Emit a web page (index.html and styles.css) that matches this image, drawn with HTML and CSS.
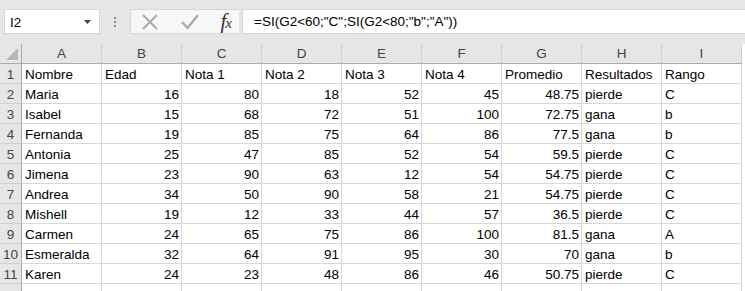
FILE: index.html
```html
<!DOCTYPE html>
<html lang="es">
<head>
    <meta charset="UTF-8">
    <title>Notas</title>
    <link rel="stylesheet" href="styles.css">
</head>
<body>
    <div class="formula-bar">
        <div class="name-box">
            <span>I2</span>
            <svg class="drop" width="7" height="4" viewBox="0 0 7 4"><path d="M0 0h7L3.5 4z" fill="#444"/></svg>
        </div>
        <div class="grip">
            <i></i><i></i><i></i>
        </div>
        <div class="fx-buttons">
            <svg width="18" height="18" viewBox="0 0 18 18"><path d="M2 2L16 16M16 2L2 16" stroke="#a8a8a8" stroke-width="1.8" fill="none"/></svg>
            <svg width="20" height="18" viewBox="0 0 20 18"><path d="M2 9l5.5 6L18 2" stroke="#a8a8a8" stroke-width="2.2" fill="none"/></svg>
            <span class="fx">f<small>x</small></span>
        </div>
        <div class="formula">=SI(G2&lt;60;"C";SI(G2&lt;80;"b";"A"))</div>
    </div>

    <table class="sheet">
        <colgroup>
            <col class="rowhead">
            <col><col><col><col><col><col><col><col><col>
        </colgroup>
        <thead>
            <tr>
                <th class="corner"><span></span></th>
                <th>A</th><th>B</th><th>C</th><th>D</th><th>E</th><th>F</th><th>G</th><th>H</th><th>I</th>
            </tr>
        </thead>
        <tbody>
            <tr><th>1</th><td>Nombre</td><td>Edad</td><td>Nota 1</td><td>Nota 2</td><td>Nota 3</td><td>Nota 4</td><td>Promedio</td><td>Resultados</td><td>Rango</td></tr>
            <tr><th>2</th><td>Maria</td><td class="n">16</td><td class="n">80</td><td class="n">18</td><td class="n">52</td><td class="n">45</td><td class="n">48.75</td><td>pierde</td><td>C</td></tr>
            <tr><th>3</th><td>Isabel</td><td class="n">15</td><td class="n">68</td><td class="n">72</td><td class="n">51</td><td class="n">100</td><td class="n">72.75</td><td>gana</td><td>b</td></tr>
            <tr><th>4</th><td>Fernanda</td><td class="n">19</td><td class="n">85</td><td class="n">75</td><td class="n">64</td><td class="n">86</td><td class="n">77.5</td><td>gana</td><td>b</td></tr>
            <tr><th>5</th><td>Antonia</td><td class="n">25</td><td class="n">47</td><td class="n">85</td><td class="n">52</td><td class="n">54</td><td class="n">59.5</td><td>pierde</td><td>C</td></tr>
            <tr><th>6</th><td>Jimena</td><td class="n">23</td><td class="n">90</td><td class="n">63</td><td class="n">12</td><td class="n">54</td><td class="n">54.75</td><td>pierde</td><td>C</td></tr>
            <tr><th>7</th><td>Andrea</td><td class="n">34</td><td class="n">50</td><td class="n">90</td><td class="n">58</td><td class="n">21</td><td class="n">54.75</td><td>pierde</td><td>C</td></tr>
            <tr><th>8</th><td>Mishell</td><td class="n">19</td><td class="n">12</td><td class="n">33</td><td class="n">44</td><td class="n">57</td><td class="n">36.5</td><td>pierde</td><td>C</td></tr>
            <tr><th>9</th><td>Carmen</td><td class="n">24</td><td class="n">65</td><td class="n">75</td><td class="n">86</td><td class="n">100</td><td class="n">81.5</td><td>gana</td><td>A</td></tr>
            <tr><th>10</th><td>Esmeralda</td><td class="n">32</td><td class="n">64</td><td class="n">91</td><td class="n">95</td><td class="n">30</td><td class="n">70</td><td>gana</td><td>b</td></tr>
            <tr><th>11</th><td>Karen</td><td class="n">24</td><td class="n">23</td><td class="n">48</td><td class="n">86</td><td class="n">46</td><td class="n">50.75</td><td>pierde</td><td>C</td></tr>
            <tr><th></th><td></td><td></td><td></td><td></td><td></td><td></td><td></td><td></td><td></td></tr>
        </tbody>
    </table>
</body>
</html>
```

FILE: styles.css
```css
body, html {
    margin: 0;
    padding: 0;
    background: #fff;
    font-family: "Liberation Sans", Arial, sans-serif;
    font-size: 13.5px;
    color: #000;
    overflow: hidden;
}
.formula-bar {
    display: flex;
    align-items: stretch;
    height: 25px;
    padding: 9px 0 10px 4px;
    background: #e6e6e6;
}
.name-box {
    width: 96px;
    display: flex;
    align-items: center;
    justify-content: space-between;
    padding: 0 8px 0 5px;
    box-sizing: border-box;
    background: #fff;
    border: 1px solid #d6d6d6;
}
.name-box span {
    padding-top: 1px;
}
.grip {
    width: 30px;
    display: flex;
    flex-direction: column;
    align-items: center;
    justify-content: center;
    gap: 2px;
}
.grip i {
    width: 2px;
    height: 2px;
    background: #8a8a8a;
}
.fx-buttons {
    width: 109px;
    display: flex;
    align-items: center;
    justify-content: space-between;
    padding: 0 8px 0 10px;
    box-sizing: border-box;
    background: #f7f7f7;
    border: 1px solid #d6d6d6;
    border-right: none;
}
.fx {
    font-family: "Liberation Serif", "Times New Roman", serif;
    font-style: italic;
    font-size: 21px;
    color: #333;
    letter-spacing: -1px;
}
.fx small {
    font-size: 15px;
}
.formula {
    flex: 1;
    margin-left: 3px;
    padding: 4px 0 0 11px;
    background: #fff;
    border: 1px solid #d6d6d6;
    border-right: none;
    white-space: nowrap;
}
.sheet {
    table-layout: fixed;
    width: 742px;
    border-collapse: separate;
    border-spacing: 0;
}
.sheet col {
    width: 80px;
}
.sheet col.rowhead {
    width: 22px;
}
.sheet th, .sheet td {
    box-sizing: border-box;
    height: 20px;
    padding: 0 3px;
    border-right: 1px solid #d8d8d8;
    border-bottom: 1px solid #d8d8d8;
    white-space: nowrap;
    overflow: hidden;
    vertical-align: bottom;
    line-height: 17px;
}
.sheet thead th {
    background: #e6e6e6;
    font-weight: normal;
    color: #444;
    border-bottom: 1px solid #ababab;
    border-right: 1px solid #cfcfcf;
    vertical-align: middle;
}
.sheet tbody th {
    background: #e6e6e6;
    font-weight: normal;
    color: #444;
    padding: 0;
    text-align: center;
    border-right: 1px solid #ababab;
    border-bottom: 1px solid #d0d0d0;
}
.sheet thead th.corner {
    border-right: 1px solid #ababab;
    position: relative;
}
.corner span {
    position: absolute;
    right: 3px;
    bottom: 3px;
    width: 0;
    height: 0;
    border-left: 12px solid transparent;
    border-bottom: 12px solid #b7b7b7;
}
.sheet td.n {
    text-align: right;
    padding-right: 2px;
}
```
